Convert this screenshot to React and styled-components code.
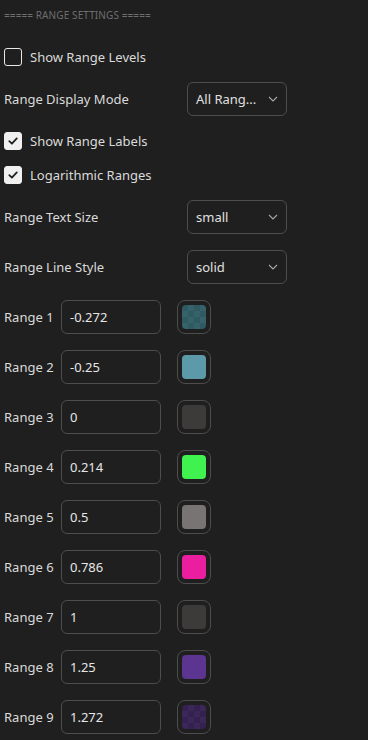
import React from "react";
import styled, { createGlobalStyle, css } from "styled-components";

const GlobalStyle = createGlobalStyle`
  html, body {
    margin: 0;
    padding: 0;
    background: #1f1f1f;
  }
  * {
    box-sizing: border-box;
  }
`;

const Panel = styled.div`
  width: 368px;
  height: 740px;
  overflow: hidden;
  background: #1f1f1f;
  padding-left: 4px;
  display: flex;
  flex-direction: column;
  font-family: "Noto Sans", "Liberation Sans", sans-serif;
  font-size: 13px;
  color: #dadada;
`;

const Header = styled.div`
  height: 30px;
  display: flex;
  align-items: center;
  font-size: 10px;
  color: #6e6e6e;
  letter-spacing: 0.1px;
`;

const Row = styled.div`
  display: flex;
  align-items: center;
  height: 34px;
  margin-top: ${(p) => p.$mt || 0}px;
`;

const Label = styled.span`
  white-space: nowrap;
  ${(p) =>
    p.$width &&
    css`
      width: ${p.$width}px;
      flex: none;
    `}
`;

const Box = styled.span`
  width: 18px;
  height: 18px;
  border-radius: 3px;
  border: 1.5px solid #e8e8e8;
  margin-right: 8px;
  display: flex;
  align-items: center;
  justify-content: center;
  flex: none;
  ${(p) =>
    p.$checked &&
    css`
      background: #f0f0f0;
      border-color: #f0f0f0;
    `}
`;

const Select = styled.div`
  width: 100px;
  height: 34px;
  border: 1px solid #4d4d4d;
  border-radius: 6px;
  display: flex;
  align-items: center;
  padding: 0 8px 0 8px;
  justify-content: space-between;
  color: #e0e0e0;
`;

const Input = styled.div`
  width: 100px;
  height: 34px;
  border: 1px solid #4d4d4d;
  border-radius: 6px;
  display: flex;
  align-items: center;
  padding: 0 8px;
  color: #e6e6e6;
  flex: none;
`;

const SwatchWrap = styled.div`
  width: 34px;
  height: 34px;
  margin-left: 16px;
  border: 1px solid #4d4d4d;
  border-radius: 8px;
  display: flex;
  align-items: center;
  justify-content: center;
`;

const Swatch = styled.div`
  width: 24px;
  height: 24px;
  border-radius: 4px;
  background: ${(p) => p.$color};
  ${(p) =>
    p.$checker &&
    css`
      background-color: ${p.$color};
      background-image: linear-gradient(45deg, ${p.$checker} 25%, transparent 25%, transparent 75%, ${p.$checker} 75%),
        linear-gradient(45deg, ${p.$checker} 25%, transparent 25%, transparent 75%, ${p.$checker} 75%);
      background-size: 12px 12px;
      background-position: 0 0, 6px 6px;
    `}
`;

const Check = () => (
  <svg width="12" height="12" viewBox="0 0 12 12">
    <path d="M2.3 6.2 L4.9 8.7 L9.8 3.4" fill="none" stroke="#222" strokeWidth="1.8" strokeLinecap="round" strokeLinejoin="round" />
  </svg>
);

const Chevron = () => (
  <svg width="10" height="6" viewBox="0 0 10 6">
    <path d="M1 1 L5 5 L9 1" fill="none" stroke="#a8a8a8" strokeWidth="1.1" />
  </svg>
);

const CheckRow = ({ checked, label, mt }) => (
  <Row $mt={mt}>
    <Box $checked={checked}>{checked && <Check />}</Box>
    <Label>{label}</Label>
  </Row>
);

const SelectRow = ({ label, value, mt }) => (
  <Row $mt={mt}>
    <Label $width={183}>{label}</Label>
    <Select>
      <span>{value}</span>
      <Chevron />
    </Select>
  </Row>
);

const ranges = [
  { value: "-0.272", color: "#2f5a62", checker: "#366269" },
  { value: "-0.25", color: "#5c9aaa" },
  { value: "0", color: "#3d3a3a" },
  { value: "0.214", color: "#40f250" },
  { value: "0.5", color: "#797474" },
  { value: "0.786", color: "#eb1ea0" },
  { value: "1", color: "#3d3a3a" },
  { value: "1.25", color: "#5c3590" },
  { value: "1.272", color: "#34214f", checker: "#3c2759" },
];

export default function App() {
  return (
    <>
      <GlobalStyle />
      <Panel>
        <Header>===== RANGE SETTINGS =====</Header>
        <CheckRow label="Show Range Levels" mt={10} />
        <SelectRow label="Range Display Mode" value="All Rang..." mt={8} />
        <CheckRow checked label="Show Range Labels" mt={8} />
        <CheckRow checked label="Logarithmic Ranges" />
        <SelectRow label="Range Text Size" value="small" mt={8} />
        <SelectRow label="Range Line Style" value="solid" mt={16} />
        {ranges.map((r, i) => (
          <Row key={i} $mt={16}>
            <Label $width={57}>Range {i + 1}</Label>
            <Input>{r.value}</Input>
            <SwatchWrap>
              <Swatch $color={r.color} $checker={r.checker} />
            </SwatchWrap>
          </Row>
        ))}
      </Panel>
    </>
  );
}
